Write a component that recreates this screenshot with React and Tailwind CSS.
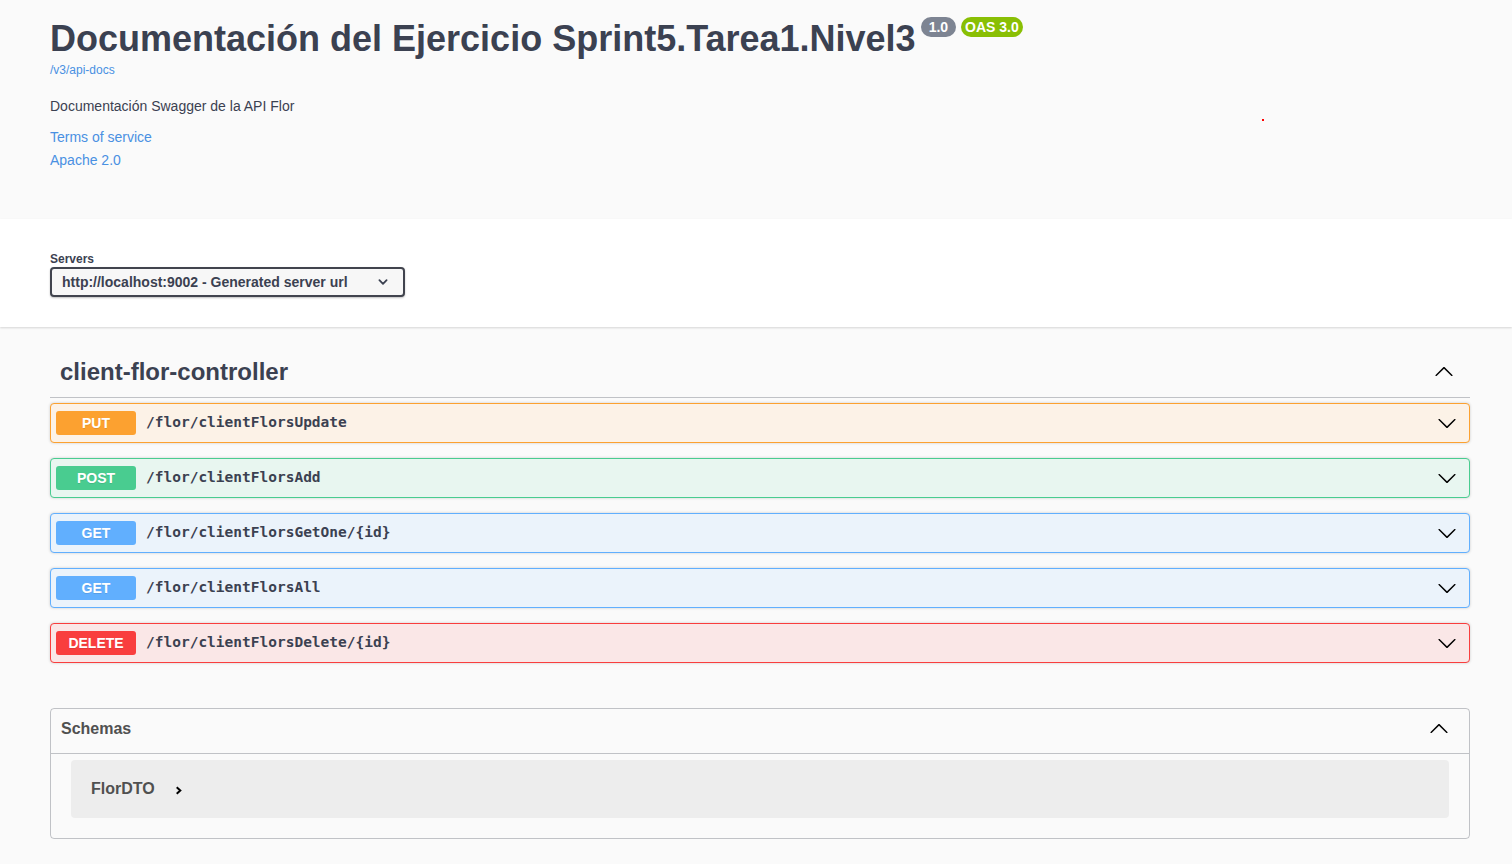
import { useState } from "react";

const ops = [
  { method: "PUT", path: "/flor/clientFlorsUpdate", box: "bg-[#fcf2e7] border-[#fca130]", badge: "bg-[#fca130]" },
  { method: "POST", path: "/flor/clientFlorsAdd", box: "bg-[#e8f6f0] border-[#49cc90]", badge: "bg-[#49cc90]" },
  { method: "GET", path: "/flor/clientFlorsGetOne/{id}", box: "bg-[#ebf3fb] border-[#61affe]", badge: "bg-[#61affe]" },
  { method: "GET", path: "/flor/clientFlorsAll", box: "bg-[#ebf3fb] border-[#61affe]", badge: "bg-[#61affe]" },
  { method: "DELETE", path: "/flor/clientFlorsDelete/{id}", box: "bg-[#fae7e7] border-[#f93e3e]", badge: "bg-[#f93e3e]" },
];

// swagger-ui arrow
const Arrow = ({ up, className }) => (
  <svg viewBox="0 0 20 20" className={className} fill="currentColor">
    <path
      transform={up ? "rotate(180 10 10)" : undefined}
      d="M17.418 6.109c.272-.268.709-.268.979 0s.27.701 0 .969l-7.908 7.83c-.27.268-.707.268-.979 0l-7.908-7.83c-.27-.268-.27-.701 0-.969.271-.268.709-.268.979 0L10 13.25l7.418-7.141z"
    />
  </svg>
);

function OpBlock({ op }) {
  return (
    <div className={`flex items-center h-[40px] border rounded-[4px] px-[5px] mb-[15px] shadow-[0_0_3px_rgba(0,0,0,0.19)] ${op.box}`}>
      <span className={`w-[80px] h-[24px] flex items-center justify-center rounded-[3px] text-white text-[14px] font-bold ${op.badge} [text-shadow:0_1px_0_rgba(0,0,0,0.1)]`}>
        {op.method}
      </span>
      <span className="ml-[10px] font-['DejaVu_Sans_Mono',monospace] font-bold text-[14.5px] text-[#3b4151] flex-1">
        {op.path}
      </span>
      <Arrow className="w-[20px] h-[20px] mr-[7px] text-black" />
    </div>
  );
}

export default function App() {
  const [open, setOpen] = useState(true);

  return (
    <div className="min-h-screen bg-[#fafafa] text-[#3b4151] font-['Liberation_Sans',Arial,sans-serif] relative">
      {/* INFO */}
      <div className="h-[219px] pl-[50px] pr-[42px] pt-[18px]">
        <div className="flex items-start">
          <h2 className="text-[36px] leading-[42px] font-bold">Documentación del Ejercicio Sprint5.Tarea1.Nivel3</h2>
          <span className="ml-[5px] -mt-[1px] h-[20px] px-[8px] rounded-full bg-[#7d8492] text-white text-[14px] font-bold leading-[20px]">1.0</span>
          <span className="ml-[5px] -mt-[1px] h-[20px] px-[4px] rounded-full bg-[#89bf04] text-white text-[14px] font-bold leading-[20px]">OAS 3.0</span>
        </div>
        <a className="block text-[12px] text-[#4990e2] mt-[2px] leading-[16px]">/v3/api-docs</a>
        <p className="text-[14px] mt-[19px] leading-[18px]">Documentación Swagger de la API Flor</p>
        <a className="block text-[14px] text-[#4990e2] mt-[13px] leading-[18px]">Terms of service</a>
        <a className="block text-[14px] text-[#4990e2] mt-[5px] leading-[18px]">Apache 2.0</a>
      </div>
      <span className="absolute left-[1262px] top-[119px] w-[2px] h-[2px] bg-[#ff0000]" />

      {/* SERVERS */}
      <div className="bg-white h-[108px] pl-[50px] pr-[42px] pt-[33px] shadow-[0_1px_2px_rgba(0,0,0,0.15)] relative">
        <div className="text-[12px] font-bold leading-[14px]">Servers</div>
        <div className="mt-[1px] w-[355px] h-[30px] border-2 border-[#41444e] rounded-[4px] bg-[#f7f7f7] shadow-[0_1px_2px_rgba(0,0,0,0.25)] flex items-center px-[10px]">
          <span className="text-[14px] font-bold flex-1">http://localhost:9002 - Generated server url</span>
          <svg viewBox="0 0 20 20" className="w-[12px] h-[12px] mr-[4px]" fill="none" stroke="#3b4151" strokeWidth="3" strokeLinecap="round" strokeLinejoin="round">
            <path d="M4 7l6 6 6-6" />
          </svg>
        </div>
      </div>

      {/* TAG */}
      <div className="pl-[50px] pr-[42px] pt-[27px]">
        <div
          className="flex items-center h-[44px] pl-[10px] pb-[8px] border-b border-[#3b4151]/30 cursor-pointer"
          onClick={() => setOpen(!open)}
        >
          <h3 className="text-[24px] font-bold flex-1">client-flor-controller</h3>
          <Arrow up={open} className="w-[20px] h-[20px] mr-[16px] text-black" />
        </div>
        <div className="pt-[5px]">
          {open && ops.map((op, i) => <OpBlock key={i} op={op} />)}
        </div>

        {/* SCHEMAS */}
        <div className="mt-[45px] border border-[#3b4151]/30 rounded-[4px] mb-[30px]">
          <div className="flex items-center h-[45px] px-[10px] pb-[4px] border-b border-[#3b4151]/30">
            <h4 className="text-[16px] font-bold text-[#505050] flex-1">Schemas</h4>
            <Arrow up className="w-[20px] h-[20px] mr-[10px] text-black" />
          </div>
          <div className="px-[20px] pt-[6px] pb-[20px]">
            <div className="h-[58px] rounded-[4px] bg-black/5 flex items-center px-[20px]">
              <span className="text-[16px] font-bold text-[#505050]">FlorDTO</span>
              <svg viewBox="0 0 10 10" className="w-[9px] h-[9px] ml-[19px] mt-[2px]" fill="none" stroke="#000" strokeWidth="2.2">
                <path d="M3 1.5l4 3.5-4 3.5" />
              </svg>
            </div>
          </div>
        </div>
      </div>
    </div>
  );
}
